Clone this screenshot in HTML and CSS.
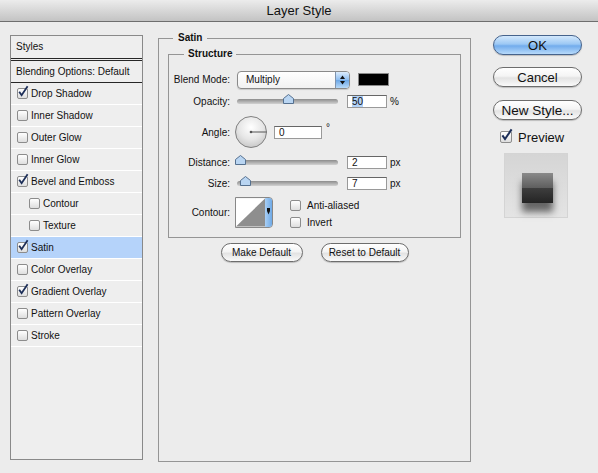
FILE: index.html
```html
<!DOCTYPE html>
<html lang="en">
<head>
    <meta charset="UTF-8">
    <title>Layer Style</title>
    <link rel="stylesheet" href="styles.css">
</head>
<body>
    <div class="titlebar">Layer Style</div>
    <div class="main">
        <!-- lista de estilos -->
        <div class="styles-list">
            <div class="list-head">Styles</div>
            <div class="list-blend">Blending Options: Default</div>
            <div class="list-item"><span class="cb"><svg width="13" height="13" viewBox="0 0 13 13"><path d="M2.2 5.8 L4.6 9.2 L10.6 0.2" fill="none" stroke="#1c2e58" stroke-width="1.8"/></svg></span>Drop Shadow</div>
            <div class="list-item"><span class="cb"></span>Inner Shadow</div>
            <div class="list-item"><span class="cb"></span>Outer Glow</div>
            <div class="list-item"><span class="cb"></span>Inner Glow</div>
            <div class="list-item"><span class="cb"><svg width="13" height="13" viewBox="0 0 13 13"><path d="M2.2 5.8 L4.6 9.2 L10.6 0.2" fill="none" stroke="#1c2e58" stroke-width="1.8"/></svg></span>Bevel and Emboss</div>
            <div class="list-item sub"><span class="cb"></span>Contour</div>
            <div class="list-item sub"><span class="cb"></span>Texture</div>
            <div class="list-item active"><span class="cb"><svg width="13" height="13" viewBox="0 0 13 13"><path d="M2.2 5.8 L4.6 9.2 L10.6 0.2" fill="none" stroke="#1c2e58" stroke-width="1.8"/></svg></span>Satin</div>
            <div class="list-item"><span class="cb"></span>Color Overlay</div>
            <div class="list-item"><span class="cb"><svg width="13" height="13" viewBox="0 0 13 13"><path d="M2.2 5.8 L4.6 9.2 L10.6 0.2" fill="none" stroke="#1c2e58" stroke-width="1.8"/></svg></span>Gradient Overlay</div>
            <div class="list-item"><span class="cb"></span>Pattern Overlay</div>
            <div class="list-item"><span class="cb"></span>Stroke</div>
        </div>

        <!-- panel central -->
        <fieldset class="panel">
            <legend>Satin</legend>
            <fieldset class="group">
                <legend>Structure</legend>
                <div class="row row-blend">
                    <span class="lbl">Blend Mode:</span>
                    <div class="select">
                        <span>Multiply</span>
                        <span class="stepper"><svg width="13" height="16" viewBox="0 0 13 16"><polygon points="4,7 6.5,3.5 9,7" fill="#111"/><polygon points="4,9 6.5,12.5 9,9" fill="#111"/></svg></span>
                    </div>
                    <span class="swatch"></span>
                </div>
                <div class="row row-opacity">
                    <span class="lbl">Opacity:</span>
                    <div class="slider"><span class="thumb" style="left:51px"><svg width="11" height="10" viewBox="0 0 11 10"><polygon points="0.5,9.5 0.5,4.5 5.5,0.5 10.5,4.5 10.5,9.5" fill="#b9d5f2" stroke="#55708f"/></svg></span></div>
                    <span class="num"><span class="hl">50</span></span>
                    <span class="unit">%</span>
                </div>
                <div class="row row-angle">
                    <span class="lbl">Angle:</span>
                    <svg class="dial" width="34" height="34" viewBox="0 0 34 34">
                        <defs>
                            <radialGradient id="dialfill" cx="50%" cy="35%" r="65%">
                                <stop offset="0" stop-color="#ffffff"/>
                                <stop offset="0.6" stop-color="#e6e6e6"/>
                                <stop offset="1" stop-color="#c9c9c9"/>
                            </radialGradient>
                        </defs>
                        <circle cx="17" cy="17" r="15.5" fill="url(#dialfill)" stroke="#808080"/>
                        <line x1="17" y1="17" x2="32.5" y2="17" stroke="#555" stroke-width="1"/>
                        <circle cx="17" cy="17" r="1.3" fill="#555"/>
                    </svg>
                    <span class="num wide">0</span>
                    <span class="deg">°</span>
                </div>
                <div class="row row-dist">
                    <span class="lbl">Distance:</span>
                    <div class="slider"><span class="thumb" style="left:3px"><svg width="11" height="10" viewBox="0 0 11 10"><polygon points="0.5,9.5 0.5,4.5 5.5,0.5 10.5,4.5 10.5,9.5" fill="#b9d5f2" stroke="#55708f"/></svg></span></div>
                    <span class="num">2</span>
                    <span class="unit">px</span>
                </div>
                <div class="row row-size">
                    <span class="lbl">Size:</span>
                    <div class="slider"><span class="thumb" style="left:8px"><svg width="11" height="10" viewBox="0 0 11 10"><polygon points="0.5,9.5 0.5,4.5 5.5,0.5 10.5,4.5 10.5,9.5" fill="#b9d5f2" stroke="#55708f"/></svg></span></div>
                    <span class="num">7</span>
                    <span class="unit">px</span>
                </div>
                <div class="row row-contour">
                    <span class="lbl">Contour:</span>
                    <div class="contour">
                        <svg width="30" height="29" viewBox="0 0 30 29"><rect width="30" height="29" fill="#fff"/><polygon points="0,29 30,0 30,29" fill="#8e8e8e"/></svg>
                        <span class="contour-btn"><svg width="7" height="29" viewBox="0 0 7 29"><path d="M2 10 h3 v3 l-1.5 3.5 l-1.5 -3.5 z" fill="#111"/></svg></span>
                    </div>
                    <div class="opts">
                        <div class="opt"><span class="cb"></span>Anti-aliased</div>
                        <div class="opt"><span class="cb"></span>Invert</div>
                    </div>
                </div>
            </fieldset>
            <div class="panel-buttons">
                <button class="btn small b1">Make Default</button>
                <button class="btn small b2">Reset to Default</button>
            </div>
        </fieldset>

        <!-- botones de la derecha -->
        <div class="side">
            <button class="btn big ok">OK</button>
            <button class="btn big">Cancel</button>
            <button class="btn big newstyle">New Style...</button>
            <div class="preview-opt"><span class="cb big-cb"><svg width="14" height="14" viewBox="0 0 14 14"><path d="M2.4 6.4 L5 10 L11.6 0.4" fill="none" stroke="#1c2e58" stroke-width="2"/></svg></span>Preview</div>
            <div class="thumb-box">
                <div class="sample"></div>
            </div>
        </div>
    </div>
</body>
</html>
```

FILE: styles.css
```css
/* Página */
body {
    margin: 0;
    width: 598px;
    height: 473px;
    overflow: hidden;
    background: #ececec;
    font-family: "Liberation Sans", Arial, sans-serif;
    font-size: 10px;
    color: #111;
}

/* Barra de título */
.titlebar {
    height: 21px;
    line-height: 22px;
    border-bottom: 1px solid #6e6e6e;
    background: linear-gradient(#ececec, #c3c3c3);
    text-align: center;
    font-size: 13px;
}

.main {
    display: flex;
    align-items: flex-start;
    padding: 10px 0 0 10px;
}

/* Lista de estilos */
.styles-list {
    width: 131px;
    height: 423px;
    margin-top: 3px;
    border: 1px solid #898989;
    background: #eeeeee;
}

.list-head {
    height: 22px;
    line-height: 22px;
    padding-left: 5px;
    border-bottom: 3px double #262626;
}

.list-blend {
    height: 21px;
    line-height: 21px;
    padding-left: 5px;
    border-bottom: 1px solid #262626;
}

.list-item {
    height: 21px;
    display: flex;
    align-items: center;
    gap: 3px;
    padding-left: 6px;
    border-bottom: 1px solid #fff;
}

.list-item.sub {
    padding-left: 18px;
}

.list-item.active {
    background: #b5d3fa;
}

/* Casillas */
.cb {
    position: relative;
    flex: none;
    width: 11px;
    height: 11px;
    box-sizing: border-box;
    border: 1px solid #8c8c8c;
    border-radius: 2px;
    background: linear-gradient(#ffffff, #dedede);
}

.cb svg {
    position: absolute;
    left: -1px;
    top: -3px;
    overflow: visible;
}

.big-cb {
    width: 12px;
    height: 12px;
}

/* Panel central */
.panel {
    margin: 0 0 0 15px;
    padding: 4px 9px 0 9px;
    width: 313px;
    height: 430px;
    box-sizing: border-box;
    min-width: 0;
    border: 1px solid #959595;
}

legend {
    font-weight: bold;
    line-height: 12px;
    padding: 0 5px;
    margin-left: 5px;
}

.group {
    margin: 0;
    padding: 10px 0 8px 0;
    min-width: 0;
    border: 1px solid #959595;
}

.group legend {
    padding: 0 4px;
    margin-left: 15px;
}

.row {
    display: flex;
    align-items: center;
}

.lbl {
    flex: none;
    width: 61px;
    margin-right: 7px;
    text-align: right;
}

.row-blend { height: 19px; }
.row-opacity { height: 14px; margin-top: 5px; }
.row-angle { height: 36px; margin-top: 6px; }
.row-dist { height: 15px; margin-top: 5px; }
.row-size { height: 14px; margin-top: 6px; }
.row-contour { height: 33px; margin-top: 6px; }

.select {
    width: 113px;
    height: 18px;
    box-sizing: border-box;
    display: flex;
    align-items: center;
    justify-content: space-between;
    padding-left: 8px;
    border: 1px solid #8a8a8a;
    border-radius: 4px;
    background: linear-gradient(#ffffff, #f1f1f1);
    overflow: hidden;
    box-shadow: 0 1px 1px rgba(0, 0, 0, 0.15);
}

.stepper {
    width: 13px;
    height: 16px;
    border-left: 1px solid #7f93ad;
    background: linear-gradient(#dcecfc, #8dbdf0 50%, #6aa6e6 51%, #b8daf9);
}

.swatch {
    width: 31px;
    height: 13px;
    margin-left: 8px;
    box-sizing: border-box;
    border: 1px solid #8a8a8a;
    background: #000;
}

.slider {
    position: relative;
    width: 101px;
    height: 5px;
    border-radius: 3px;
    background: linear-gradient(#8c8c8c, #d2d2d2);
}

.thumb {
    position: absolute;
    top: -5px;
    margin-left: -5px;
    width: 11px;
    height: 10px;
}

.thumb svg {
    display: block;
}

.num {
    width: 40px;
    height: 13px;
    margin-left: 9px;
    box-sizing: border-box;
    padding-left: 4px;
    line-height: 11px;
    border: 1px solid #999;
    border-top-color: #666;
    background: #fff;
}

.num.wide {
    width: 48px;
    margin-left: 6px;
}

.hl {
    background: #b3d3f8;
}

.unit {
    margin-left: 3px;
}

.deg {
    align-self: flex-start;
    margin: 8px 0 0 4px;
}

.dial {
    margin-left: -3px;
}

.contour {
    display: flex;
    width: 38px;
    height: 31px;
    margin-left: -2px;
    box-sizing: border-box;
    border: 1px solid #888;
    border-radius: 0 4px 4px 0;
    overflow: hidden;
}

.contour svg {
    display: block;
}

.contour-btn {
    width: 7px;
    background: linear-gradient(90deg, #a9cff5, #6ea9e6);
}

.opts {
    align-self: flex-end;
    display: flex;
    flex-direction: column;
    gap: 6px;
    margin-left: 17px;
    padding-bottom: 1px;
}

.opt {
    display: flex;
    align-items: center;
    gap: 6px;
    height: 11px;
}

/* Botones */
.btn {
    padding: 0;
    font-family: inherit;
    color: #111;
    border: 1px solid #6d6d6d;
    border-radius: 11px;
    background: linear-gradient(#ffffff, #f4f4f4 45%, #e3e3e3 55%, #fafafa);
    box-shadow: 0 1px 1px rgba(0, 0, 0, 0.2);
}

.panel-buttons {
    display: flex;
    justify-content: center;
    gap: 18px;
    margin-top: 5px;
}

.small {
    height: 19px;
    font-size: 10px;
}

.b1 { width: 82px; }
.b2 { width: 88px; }

.side {
    display: flex;
    flex-direction: column;
    align-items: flex-start;
    width: 89px;
    margin: 3px 0 0 22px;
}

.big {
    width: 89px;
    height: 20px;
    font-size: 13px;
    margin-bottom: 12px;
}

.newstyle {
    margin-top: 1px;
    margin-bottom: 0;
    font-size: 13.5px;
}

.ok {
    border-color: #46638c;
    background: linear-gradient(#d3e8fc, #9cc8f4 45%, #72acec 55%, #b7dafb);
}

.preview-opt {
    display: flex;
    align-items: center;
    gap: 6px;
    height: 12px;
    margin: 11px 0 0 7px;
    font-size: 13px;
}

.thumb-box {
    width: 64px;
    height: 65px;
    margin: 10px 0 0 11px;
    box-sizing: border-box;
    padding: 19px 0 0 17px;
    border: 1px solid #d4d4d4;
    background: linear-gradient(#d5d5d5, #e4e4e4);
}

.sample {
    width: 31px;
    height: 30px;
    background: linear-gradient(#8a8a8a, #5e5e5e 50%, #3e3e3e 50%, #242424);
    box-shadow: 0 9px 7px rgba(0, 0, 0, 0.55);
}
```
